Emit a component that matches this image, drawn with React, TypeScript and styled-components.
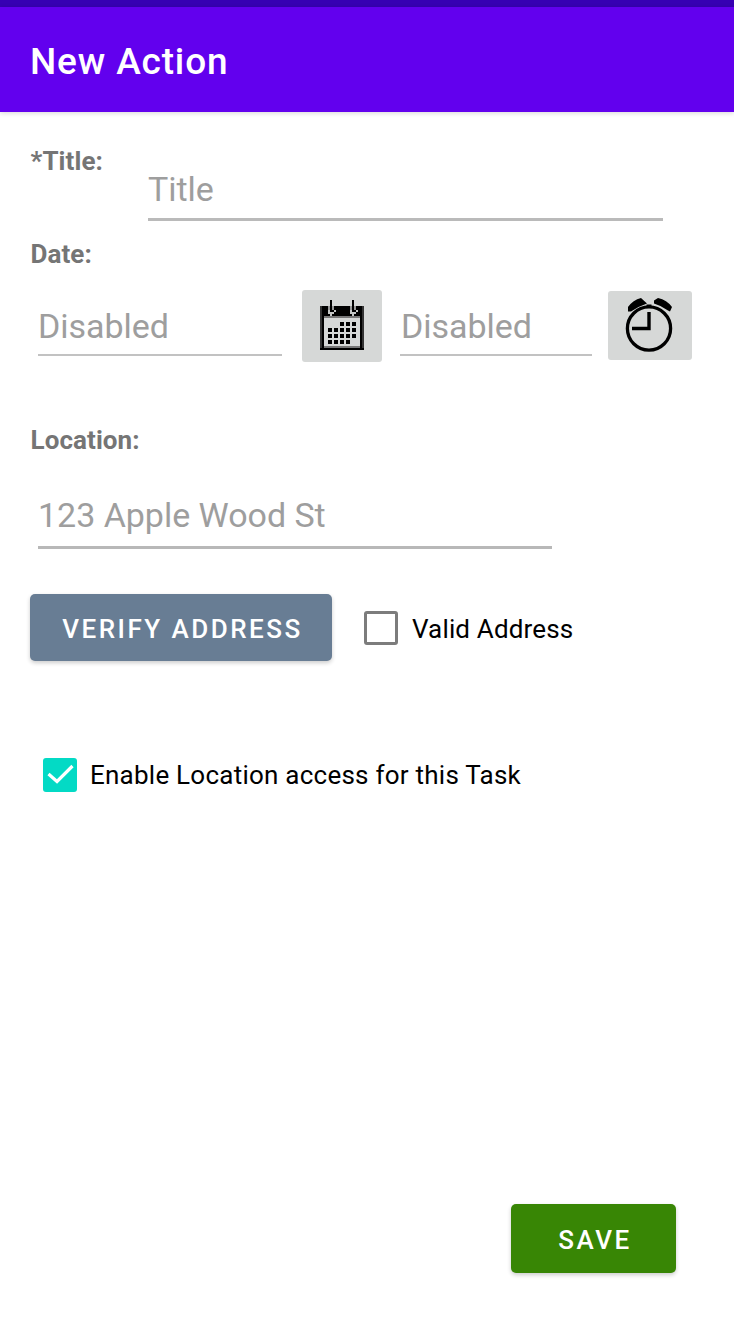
import React from 'react';
import styled, { createGlobalStyle } from 'styled-components';

const GlobalStyle = createGlobalStyle`
  * { box-sizing: border-box; }
  body { margin: 0; background: #fff; font-family: Roboto, sans-serif; }
`;

const Screen = styled.div`
  display: flex;
  flex-direction: column;
  height: 1340px;
  overflow: hidden;
  background: #fff;
`;

const StatusBar = styled.div`
  height: 7px;
  background: #3700b3;
`;

const AppBar = styled.header`
  height: 105px;
  padding: 4px 30px 0;
  display: flex;
  align-items: center;
  background: #6200ee;
  box-shadow: 0 1px 5px rgba(0, 0, 0, 0.17);
`;

const Heading = styled.h1`
  margin: 0;
  font-size: 37px;
  line-height: 44px;
  font-weight: 500;
  letter-spacing: 0.85px;
  color: #fff;
`;

const Form = styled.main`
  flex: 1;
  display: flex;
  flex-direction: column;
  padding: 33px 42px 0 30px;
`;

const Row = styled.div<{ $top?: number; $left?: number; $align?: string }>`
  display: flex;
  align-items: ${(p) => p.$align ?? 'flex-start'};
  margin-top: ${(p) => p.$top ?? 0}px;
  padding-left: ${(p) => p.$left ?? 0}px;
`;

const Label = styled.label<{ $width?: number }>`
  width: ${(p) => (p.$width ? `${p.$width}px` : 'auto')};
  padding-left: 0.5px;
  font-size: 26px;
  line-height: 32px;
  font-weight: 700;
  letter-spacing: 0.08px;
  color: #757575;
`;

const Field = styled.div<{ $width: number; $top?: number; $gap: number; $line: string; $indent?: number }>`
  width: ${(p) => p.$width}px;
  margin-top: ${(p) => p.$top ?? 0}px;
  padding-left: ${(p) => p.$indent ?? 0}px;
  padding-bottom: ${(p) => p.$gap}px;
  border-bottom: ${(p) => p.$line};
  font-size: 34px;
  line-height: 40px;
  letter-spacing: -0.03px;
  white-space: nowrap;
  color: #9e9e9e;
`;

const IconButton = styled.button<{ $width: number; $height: number; $left: number }>`
  display: flex;
  width: ${(p) => p.$width}px;
  height: ${(p) => p.$height}px;
  margin: 0 0 0 ${(p) => p.$left}px;
  padding: 0;
  border: 0;
  border-radius: 3px;
  background: #d6d8d7;
`;

const Button = styled.button<{ $color: string; $width: number; $height: number; $shift?: number }>`
  width: ${(p) => p.$width}px;
  height: ${(p) => p.$height}px;
  padding: ${(p) => p.$shift ?? 0}px 0 0 3px;
  border: 0;
  border-radius: 5px;
  background: ${(p) => p.$color};
  box-shadow: 0 2px 4px rgba(0, 0, 0, 0.2);
  color: #fff;
  font: 500 26px/32px Roboto, sans-serif;
  letter-spacing: 2.5px;
  white-space: nowrap;
`;

const Option = styled.label<{ $gap: number; $left?: number; $spacing?: number }>`
  display: flex;
  align-items: center;
  gap: ${(p) => p.$gap}px;
  margin-left: ${(p) => p.$left ?? 0}px;
  font-size: 26px;
  line-height: 36px;
  letter-spacing: ${(p) => p.$spacing ?? 0}px;
  white-space: nowrap;
  color: #000;
`;

const OptionText = styled.span<{ $shift?: number }>`
  padding-top: ${(p) => p.$shift ?? 0}px;
`;

const Box = styled.span<{ $checked?: boolean }>`
  display: flex;
  width: 34px;
  height: 34px;
  border: ${(p) => (p.$checked ? '0' : '3px solid #7c7c7c')};
  border-radius: 3px;
  background: ${(p) => (p.$checked ? '#03dac5' : '#fff')};
`;

const Actions = styled.footer`
  display: flex;
  justify-content: flex-end;
  padding: 0 58px 67px 0;
`;

const cells = [
  [2, 3, 4],
  [0, 1, 2, 3, 4],
  [0, 1, 2, 3, 4],
  [0, 1, 2, 3],
];

const CalendarIcon = () => (
  <svg width="80" height="72" viewBox="0 0 80 72">
    <path d="M18 16H62V60H18Z" fill="#000" />
    <path d="M18 16h2v42h-2zM60 16h2v42h-2z" fill="#333" />
    <path d="M22 28H58V56H22Z" fill="#d6d8d7" />
    <path d="M22 26h36v2H22zM22 56h36v2H22z" fill="#777" />
    <path d="M26 16h2v4h-2zM30 16h2v4h-2zM48 16h2v4h-2zM52 16h2v4h-2z" fill="#999" />
    <path d="M26 20h2v2h4v-2h2v2h-2v2h-2v2h-2v-2h-2zM48 20h2v2h4v-2h2v2h-2v2h-2v2h-2v-2h-2z" fill="#c4c6c5" />
    <path d="M28 10h2v12h-2zM50 10h2v12h-2z" fill="#000" />
    {cells.map((row, y) =>
      row.map((x) => <rect key={`${x}-${y}`} x={26 + x * 6} y={32 + y * 6} width="4" height="4" fill="#000" />),
    )}
  </svg>
);

const ClockIcon = () => (
  <svg width="84" height="68" viewBox="0 0 84 68" fill="none">
    <circle cx="41" cy="37.5" r="21.6" stroke="#000" strokeWidth="3.3" />
    <path d="M38.5 14.5h5" stroke="#000" strokeWidth="2" />
    <path d="M41 21V37.5H24" stroke="#000" strokeWidth="3.4" />
    <path
      d="M20 20.5V16Q25 9 33 7L39 12.5Q30 15.5 23 20.5ZM62 20.5L64 16Q59 9 50 7L46 9.5V12.5Q53 14.5 60 19.5Z"
      fill="#000"
    />
  </svg>
);

const CheckMark = () => (
  <svg width="34" height="34" viewBox="0 0 34 34" fill="none">
    <path d="M5.5 16L14 23.5L29.5 8" stroke="#fff" strokeWidth="3.2" />
  </svg>
);

export default function App() {
  return (
    <Screen>
      <GlobalStyle />
      <StatusBar />
      <AppBar>
        <Heading>New Action</Heading>
      </AppBar>
      <Form>
        <Row>
          <Label $width={118}>*Title:</Label>
          <Field $width={515} $top={24} $gap={9} $line="3px solid #bababa">Title</Field>
        </Row>
        <Row $top={17}>
          <Label>Date:</Label>
        </Row>
        <Row $top={20} $left={8}>
          <Field $width={244} $top={16} $gap={8} $line="2px solid #c2c2c2">Disabled</Field>
          <IconButton $width={80} $height={72} $left={20} aria-label="Pick date">
            <CalendarIcon />
          </IconButton>
          <Row $left={18}>
            <Field $width={192} $top={16} $gap={8} $indent={1} $line="2px solid #c2c2c2">Disabled</Field>
          </Row>
          <Row $top={1}>
            <IconButton $width={84} $height={69} $left={16} aria-label="Pick time">
              <ClockIcon />
            </IconButton>
          </Row>
        </Row>
        <Row $top={62}>
          <Label>Location:</Label>
        </Row>
        <Row $top={39} $left={8}>
          <Field $width={514} $gap={11} $line="3px solid #b8b8b8">123 Apple Wood St</Field>
        </Row>
        <Row $top={45} $align="center">
          <Button $color="#687d94" $width={302} $height={67} $shift={2}>VERIFY ADDRESS</Button>
          <Option $left={32} $gap={14} $spacing={0.15}>
            <Box />
            <OptionText $shift={2}>Valid Address</OptionText>
          </Option>
        </Row>
        <Row $top={96} $left={13}>
          <Option $gap={13} $spacing={0.24}>
            <Box $checked>
              <CheckMark />
            </Box>
            <OptionText>Enable Location access for this Task</OptionText>
          </Option>
        </Row>
      </Form>
      <Actions>
        <Button $color="#388605" $width={165} $height={69} $shift={2}>SAVE</Button>
      </Actions>
    </Screen>
  );
}
